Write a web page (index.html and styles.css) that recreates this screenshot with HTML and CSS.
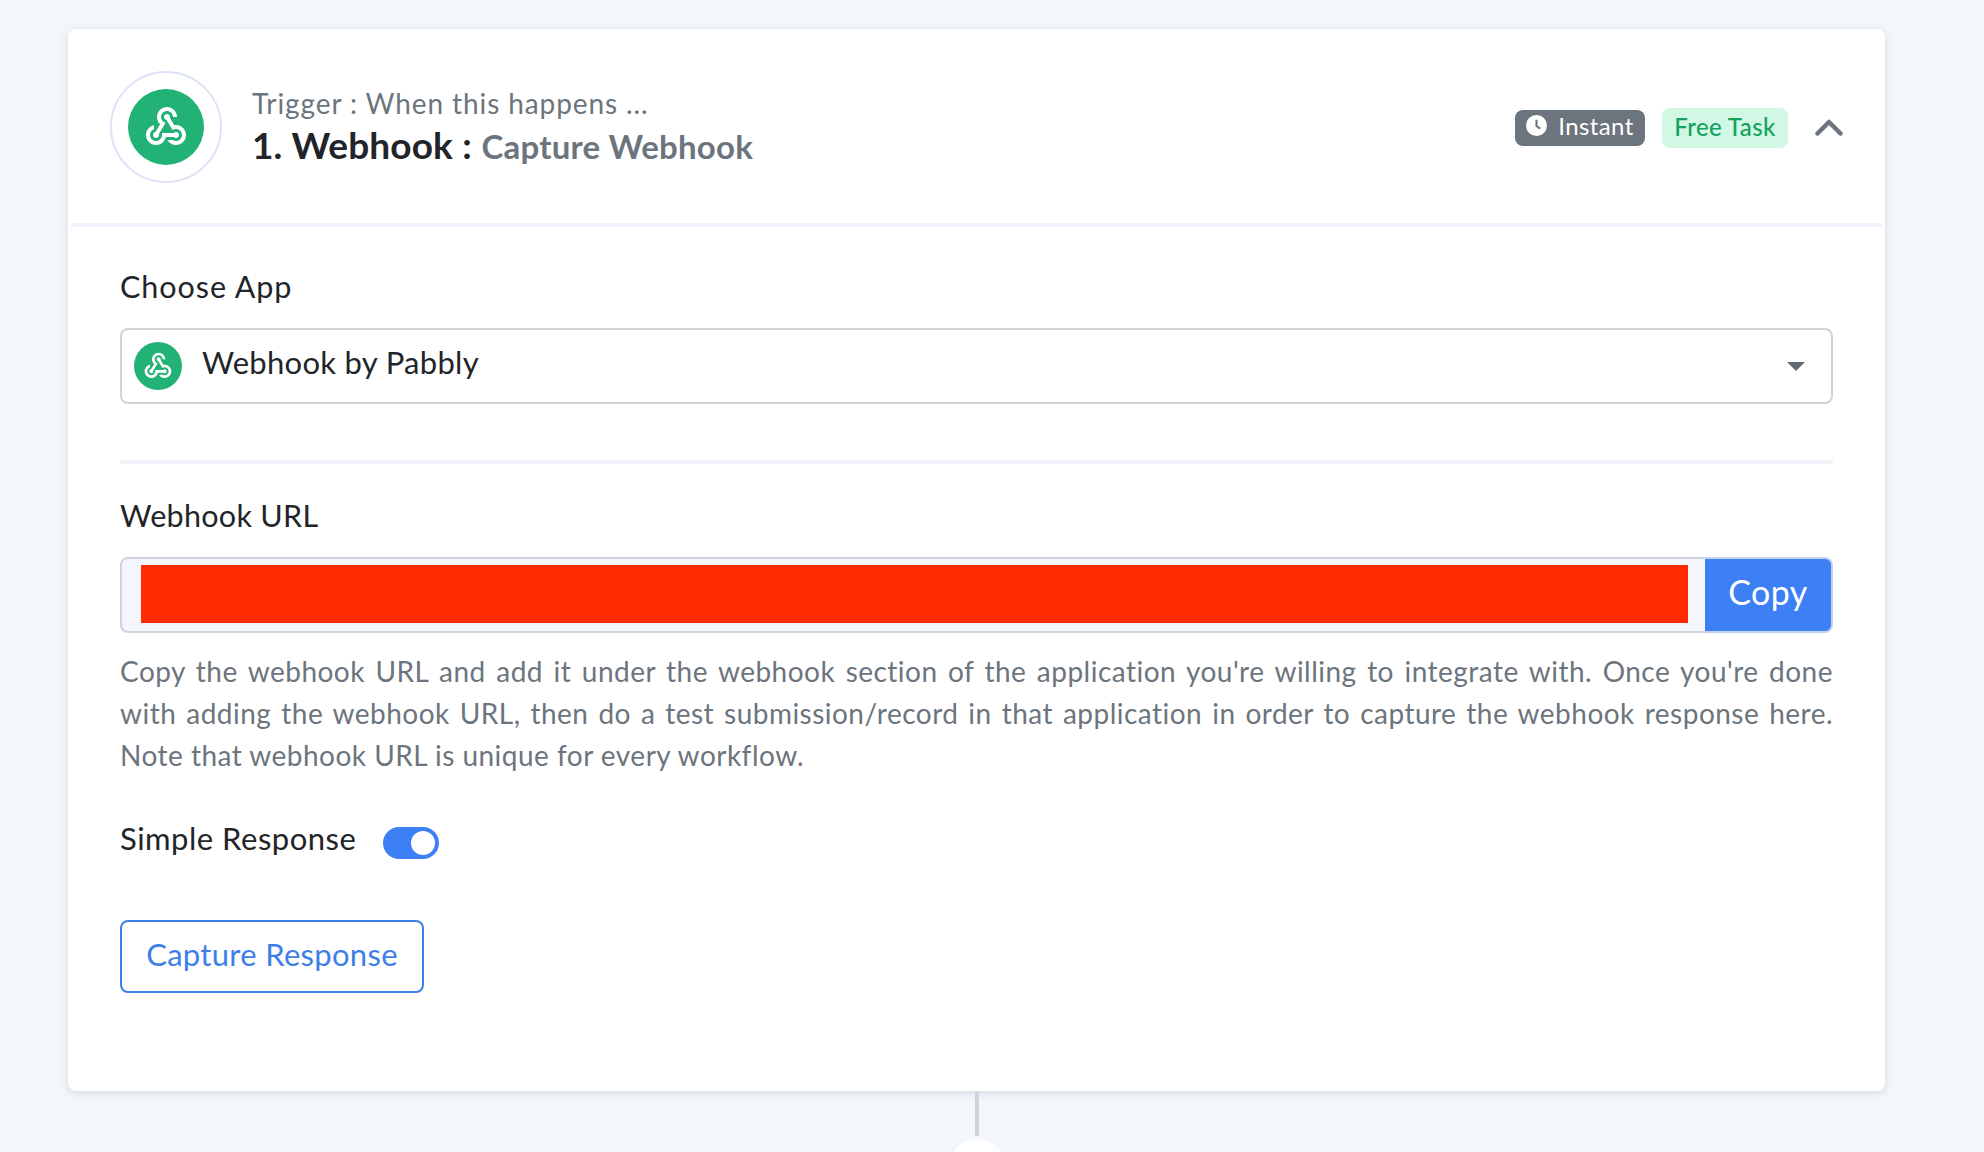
FILE: index.html
```html
<!DOCTYPE html>
<html lang="en">
<head>
<meta charset="utf-8">
<title>Webhook trigger</title>
<link rel="stylesheet" href="styles.css">
</head>
<body>
<svg class="sprite" width="0" height="0" aria-hidden="true">
  <symbol id="webhook" viewBox="0 0 24 24">
    <path fill="#fff" d="M10 15l5.88.01c.27-.31.67-.51 1.12-.51.83 0 1.5.67 1.5 1.5s-.67 1.5-1.5 1.5c-.44 0-.84-.19-1.12-.5H11.9c-.46 2.28-2.48 4-4.9 4-2.76 0-5-2.24-5-5 0-2.42 1.72-4.44 4-4.9v2.07c-1.16.41-2 1.53-2 2.83 0 1.65 1.35 3 3 3s3-1.35 3-3v-1zm2.5-11c1.65 0 3 1.35 3 3h2c0-2.76-2.24-5-5-5s-5 2.24-5 5c0 1.43.6 2.71 1.55 3.62l-2.35 3.9c-.68.14-1.2.75-1.2 1.48 0 .83.67 1.5 1.5 1.5s1.5-.67 1.5-1.5c0-.16-.02-.31-.07-.45l3.38-5.63C10.49 9.61 9.5 8.42 9.5 7c0-1.65 1.35-3 3-3zm4.5 9c-.64 0-1.23.2-1.72.54l-3.05-5.07C11.53 8.35 11 7.74 11 7c0-.83.67-1.5 1.5-1.5S14 6.17 14 7c0 .15-.02.29-.06.43l2.19 3.65c.28-.05.57-.08.87-.08 2.76 0 5 2.24 5 5s-2.24 5-5 5c-1.85 0-3.47-1.01-4.33-2.5h2.67c.48.32 1.05.5 1.66.5 1.65 0 3-1.35 3-3s-1.35-3-3-3z"/>
  </symbol>
</svg>
<main class="card">
  <header class="head">
    <div class="ring"><span class="app-icon app-icon-lg"><svg class="hook-lg"><use href="#webhook"/></svg></span></div>
    <div class="titles">
      <div class="kicker">Trigger : When this happens ...</div>
      <div class="title"><strong>1. Webhook :</strong> <span>Capture Webhook</span></div>
    </div>
    <div class="head-right">
      <span class="badge badge-dark">
        <svg class="clock" viewBox="0 0 20 20"><circle cx="10" cy="10" r="10" fill="#fff"/><path d="M10 4.5V10.5L13.5 13" fill="none" stroke="#6c757d" stroke-width="2"/></svg>
        Instant
      </span>
      <span class="badge badge-green">Free Task</span>
      <svg class="chevron" viewBox="0 0 28 17"><path d="M2.5 14.5 14 3l11.5 11.5" fill="none" stroke="#6c757d" stroke-width="4.5" stroke-linecap="round" stroke-linejoin="round"/></svg>
    </div>
  </header>
  <section class="body">
    <label class="label label-app">Choose App</label>
    <div class="select">
      <span class="app-icon app-icon-sm"><svg class="hook-sm"><use href="#webhook"/></svg></span>
      <span class="select-text">Webhook by Pabbly</span>
      <span class="caret"></span>
    </div>
    <hr class="rule">
    <label class="label label-url">Webhook URL</label>
    <div class="url-group">
      <div class="url-field"><div class="redact"></div></div>
      <button class="copy" type="button">Copy</button>
    </div>
    <p class="help">Copy the webhook URL and add it under the webhook section of the application you're willing to integrate with. Once you're done with adding the webhook URL, then do a test submission/record in that application in order to capture the webhook response here. Note that webhook URL is unique for every workflow.</p>
    <div class="toggle-row">
      <span class="toggle-label">Simple Response</span>
      <span class="toggle"><span class="knob"></span></span>
    </div>
    <button class="capture" type="button">Capture Response</button>
  </section>
</main>
<div class="connector">
  <div class="line"></div>
  <div class="dot"></div>
</div>
</body>
</html>
```

FILE: styles.css
```css
* { box-sizing: border-box; }
html, body { margin: 0; height: 100%; overflow: hidden; }
body {
  background: #f3f7fb;
  font-family: "Lato", "Liberation Sans", sans-serif;
  color: #212529;
  padding-top: 29px;
}
.sprite { position: absolute; }
.card {
  width: 1817px;
  height: 1062px;
  margin-left: 68px;
  background: #fff;
  border-radius: 8px;
  box-shadow: 0 2px 8px rgba(60, 70, 90, .16);
}
.head {
  height: 198px;
  margin: 0 3px;
  padding: 2px 39px 0;
  display: flex;
  align-items: center;
  border-bottom: 4px solid #f1f5fb;
}
.ring {
  width: 112px;
  height: 112px;
  border: 2px solid #dde3f6;
  border-radius: 50%;
  display: flex;
  align-items: center;
  justify-content: center;
  flex: none;
}
.app-icon {
  background: #23b275;
  border-radius: 50%;
  display: flex;
  align-items: center;
  justify-content: center;
  flex: none;
}
.app-icon-lg { width: 76px; height: 76px; }
.app-icon-sm { width: 48px; height: 48px; }
.hook-lg { width: 48px; height: 48px; }
.hook-sm { width: 32px; height: 32px; }
.titles { margin-left: 30px; padding-bottom: 1px; }
.kicker {
  font-size: 28px;
  line-height: 36px;
  color: #6c757d;
  letter-spacing: .9px;
}
.title {
  font-size: 34px;
  line-height: 44px;
  margin-top: 2px;
  white-space: nowrap;
}
.title strong { font-size: 37px; font-weight: 700; color: #212529; letter-spacing: .15px; }
.title span { font-size: 33px; font-weight: 700; color: #6c757d; margin-left: 1px; letter-spacing: .2px; }
.head-right { margin-left: auto; display: flex; align-items: center; }
.badge {
  display: flex;
  align-items: center;
  justify-content: center;
  font-size: 24px;
  border-radius: 8px;
  letter-spacing: .4px;
}
.badge-dark {
  width: 130px;
  height: 36px;
  background: #6c757d;
  color: #fff;
  gap: 11px;
  margin-top: 1px;
  padding-bottom: 5px;
}
.clock { width: 21px; height: 21px; }
.badge-green {
  width: 126px;
  height: 40px;
  margin-left: 17px;
  margin-top: 1px;
  background: #d1f7e5;
  color: #14a25d;
  font-weight: 500;
  padding-bottom: 3px;
}
.chevron { width: 28px; height: 17px; margin-left: 27px; }
.body { padding: 0 52px; }
.label { display: block; font-size: 30.5px; line-height: 40px; letter-spacing: .45px; }
.label-app { margin-top: 39px; letter-spacing: .95px; }
.select {
  height: 76px;
  margin-top: 22px;
  border: 2px solid #ced4da;
  border-radius: 8px;
  display: flex;
  align-items: center;
  padding: 0 26px 0 12px;
}
.select-text { margin-left: 20px; font-size: 31px; letter-spacing: .3px; margin-top: -8px; }
.caret {
  margin-left: auto;
  border-left: 9px solid transparent;
  border-right: 9px solid transparent;
  border-top: 9px solid #5f6b73;
}
.rule {
  height: 4px;
  margin: 56px 0 0;
  border: 0;
  background: #f1f5fb;
}
.label-url { margin-top: 31px; letter-spacing: .3px; }
.url-group {
  display: flex;
  height: 76px;
  margin-top: 22px;
}
.url-field {
  flex: 1;
  background: #f3f6fa;
  border: 2px solid #ced4da;
  border-right: 0;
  border-radius: 8px 0 0 8px;
  padding: 6px 17px 8px 19px;
}
.redact { height: 100%; background: #ff2a00; }
.copy {
  width: 128px;
  background: #3d7ff5;
  border: 2px solid #c3d3ef;
  border-left: 0;
  border-radius: 0 8px 8px 0;
  color: #fff;
  font: 34px "Lato", "Liberation Sans", sans-serif;
  letter-spacing: .4px;
  padding: 0 0 8px;
}
.help {
  margin: 17px 0 0;
  font-size: 28px;
  line-height: 42px;
  color: #6c757d;
  text-align: justify;
  letter-spacing: .48px;
}
.toggle-row { display: flex; align-items: center; margin-top: 44px; height: 40px; }
.toggle-label { font-size: 31px; letter-spacing: .5px; margin-top: -5px; }
.toggle {
  width: 56px;
  height: 32px;
  margin-left: 27px;
  border-radius: 16px;
  background: #3d7ff5;
  display: flex;
  align-items: center;
  justify-content: flex-end;
  padding-right: 4px;
  margin-top: 6px;
}
.knob { width: 24px; height: 24px; border-radius: 50%; background: #fff; }
.capture {
  display: block;
  width: 304px;
  height: 73px;
  margin-top: 60px;
  background: #fff;
  border: 2px solid #3d7fe8;
  border-radius: 8px;
  color: #3d7fe8;
  font: 31px "Lato", "Liberation Sans", sans-serif;
  letter-spacing: .3px;
  padding: 0 0 6px;
}
.connector {
  display: flex;
  flex-direction: column;
  align-items: center;
  width: 60px;
  margin-left: 947px;
}
.line { width: 4px; height: 45px; background: #ced4da; }
.dot { width: 56px; height: 56px; margin-top: 3px; border-radius: 50%; background: #fff; flex: none; }
```
